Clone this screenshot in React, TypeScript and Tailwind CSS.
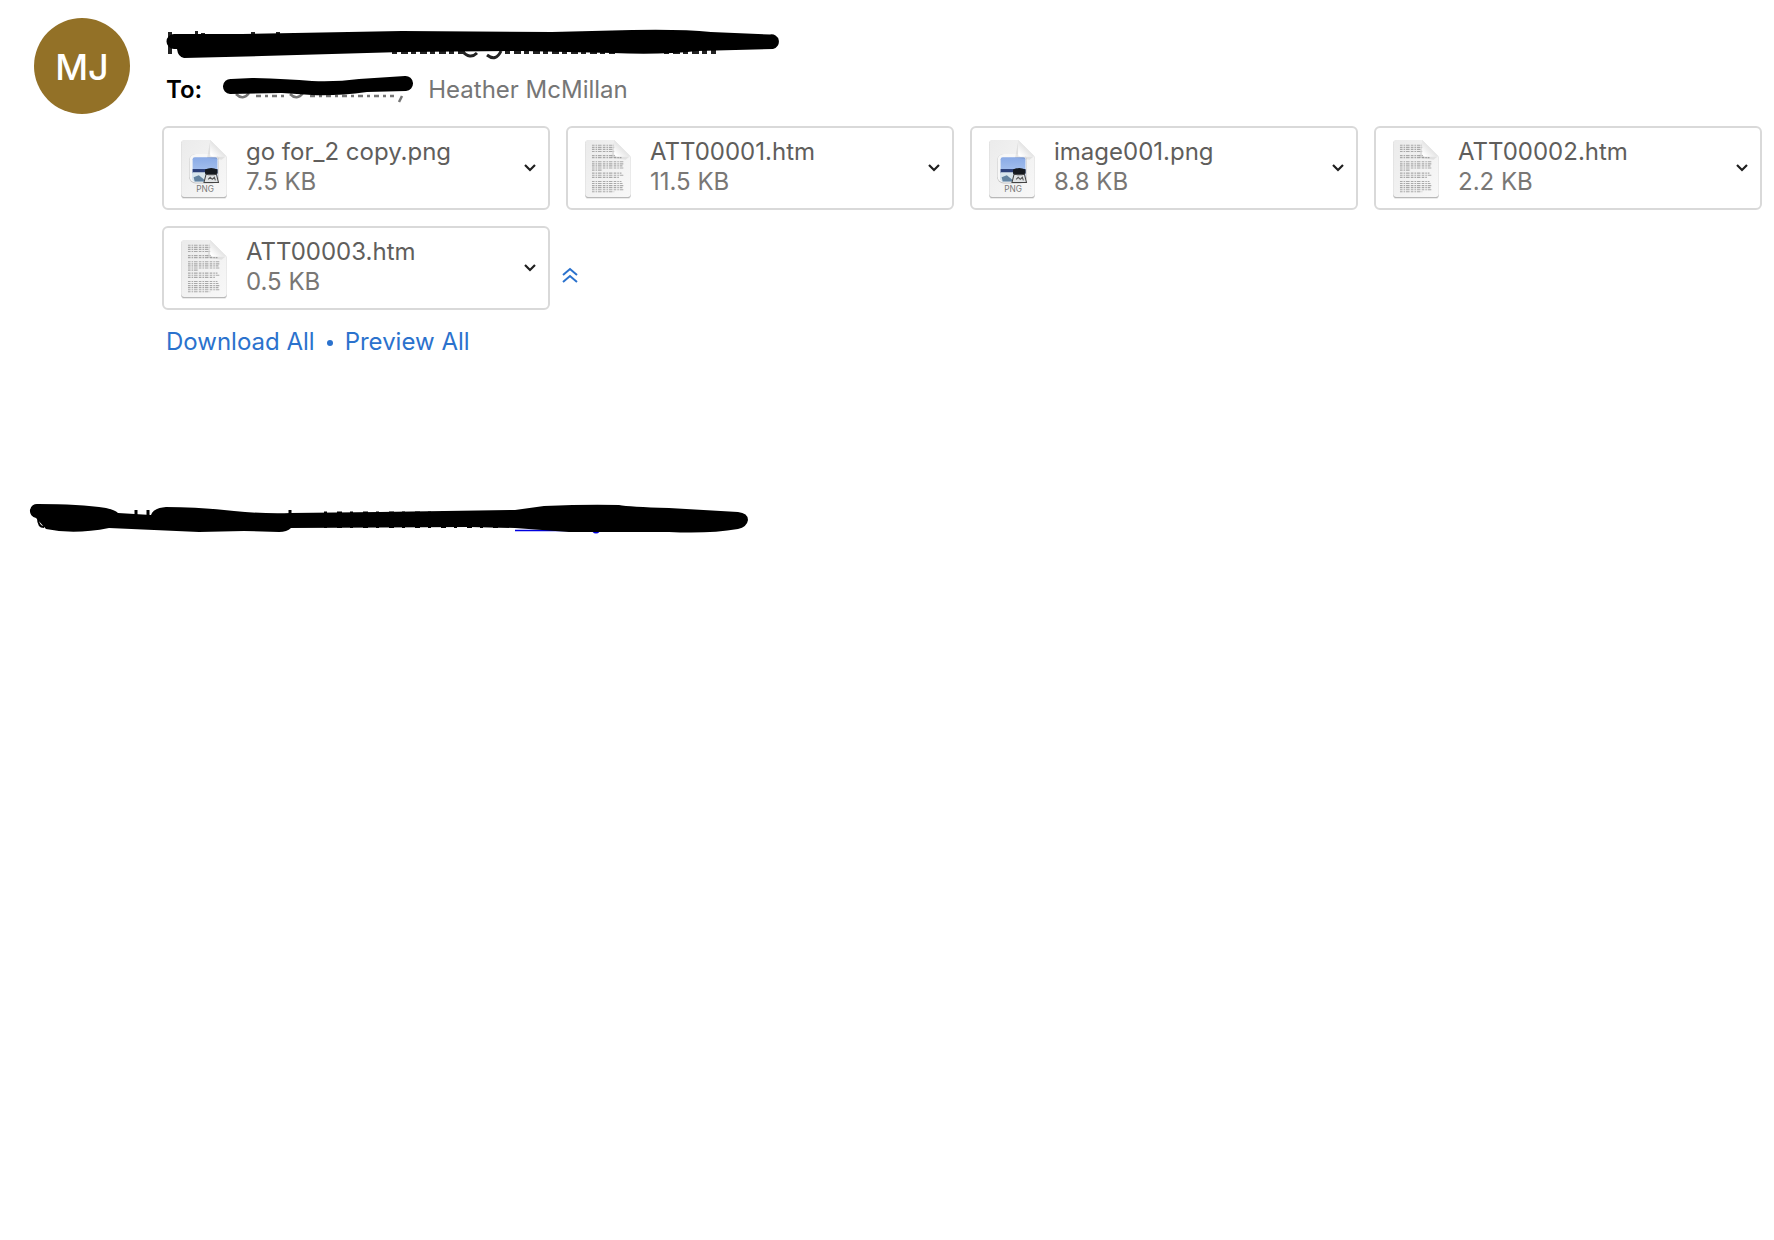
import React from 'react';

type AttachmentKind = 'png' | 'text';

interface Attachment {
  name: string;
  size: string;
  kind: AttachmentKind;
}

const attachments: Attachment[] = [
  { name: 'go for_2 copy.png', size: '7.5 KB', kind: 'png' },
  { name: 'ATT00001.htm', size: '11.5 KB', kind: 'text' },
  { name: 'image001.png', size: '8.8 KB', kind: 'png' },
  { name: 'ATT00002.htm', size: '2.2 KB', kind: 'text' },
  { name: 'ATT00003.htm', size: '0.5 KB', kind: 'text' }
];

// y position and right edge of each line on the text document icon
const docLines = [
  [6, 29], [8, 30], [10, 28], [12, 30],
  [16, 31], [18, 36],
  [22, 38], [24, 39], [26, 37], [28, 38], [30, 18],
  [33, 36], [35, 39], [37, 34],
  [41, 36], [43, 37], [45, 38], [47, 37], [49, 38], [51, 29]
];

function FileIcon({ kind }: { kind: AttachmentKind }) {
  return (
    <svg className="h-[60px] w-12 shrink-0" viewBox="0 -1 46 58" overflow="visible" aria-hidden="true">
      <defs>
        <linearGradient id={`page-${kind}`} x1="0" y1="0" x2="1" y2="1">
          <stop offset="0" stopColor="#ebebeb" />
          <stop offset="1" stopColor="#f8f8f8" />
        </linearGradient>
        <linearGradient id={`fold-${kind}`} x1="0" y1="1" x2="1" y2="0">
          <stop offset="0.1" stopColor="#ffffff" />
          <stop offset="0.5" stopColor="#e4e4e4" />
        </linearGradient>
        <linearGradient id={`sky-${kind}`} x1="0" y1="0" x2="0" y2="1">
          <stop offset="0" stopColor="#8aaae6" />
          <stop offset="1" stopColor="#b7d0f3" />
        </linearGradient>
      </defs>
      <path d="M4 2h25l16 16v37a3 3 0 0 1-3 3H4a3 3 0 0 1-3-3V5a3 3 0 0 1 3-3z" fill="#000" opacity="0.08" />
      <path d="M4 1.500h25l16 16V54a3 3 0 0 1-3 3H4a3 3 0 0 1-3-3V4.500a3 3 0 0 1 3-3z" fill="#b8b8b8" />
      <path d="M4 1h25l16 16v36a3 3 0 0 1-3 3H4a3 3 0 0 1-3-3V4a3 3 0 0 1 3-3z" fill={`url(#page-${kind})`} />
      {kind === 'text' &&
        docLines.map(([y, end]) => (
          <path key={y} d={`M7.500 ${y}H${end}`} stroke="#a9a9a9" strokeWidth="1.100" strokeDasharray="2.500 1 1.500 0.800 3.500 1.200" />
        ))}
      {kind === 'png' && (
        <>
          <rect x="8.500" y="14.500" width="29" height="28.500" rx="6.500" fill="#c4c4c4" />
          <rect x="9" y="14.500" width="28" height="27.500" rx="6" fill="#f7f7f7" />
          <rect x="12" y="17.500" width="24" height="23.500" rx="2" fill={`url(#sky-${kind})`} />
          <path d="M12 29h24v4H12z" fill="#2b3f78" />
          <path d="M12 32h12l3 9H14a2 2 0 0 1-2-2z" fill="#d8e5ec" />
          <path d="M13 37l5-2 5 4v2h-9z" fill="#6383a0" />
          <path d="M24 29.500q6-3 12 0v4q-6 2-12 0z" fill="#15191f" />
          <path d="M25 34q5 1 10 0l2 8H23z" fill="#dfe2e4" stroke="#444" strokeWidth="1" />
          <path d="M27 39l2-2 2 2 2-2 1 3" stroke="#555" strokeWidth="1" fill="none" />
          <text x="24" y="51" textAnchor="middle" fontFamily="Inter, sans-serif" fontSize="8" fill="#777">PNG</text>
        </>
      )}
      <path d="M29 2v15h15l-4 3-14-2z" fill="#000" opacity="0.07" />
      <path d="M29 1l16 16H32a3 3 0 0 1-3-3z" fill={`url(#fold-${kind})`} />
    </svg>
  );
}

function AttachmentCard({ name, size, kind }: Attachment) {
  return (
    <li className="flex h-[84px] items-center rounded-md border-2 border-[#d9d9d9] pl-4 pr-1.5">
      <FileIcon kind={kind} />
      <div className="ml-[18px] min-w-0 flex-1 pb-0.5 leading-[30px]">
        <p className="truncate text-[#605e5c]">{name}</p>
        <p className="text-[#797775]">{size}</p>
      </div>
      <button type="button" aria-label={`Options for ${name}`} className="flex h-8 w-6 items-center justify-center text-[#1f1f1f]">
        <svg width="14" height="10" viewBox="0 0 14 10" fill="none" stroke="currentColor" strokeWidth="2.200">
          <path d="M2 2l5 5 5-5" />
        </svg>
      </button>
    </li>
  );
}

export default function App() {
  return (
    <main className="min-h-screen bg-white pt-[18px] font-['Inter',sans-serif] text-2xl leading-[30px]">
      <header className="flex pl-[34px] pr-3">
        <div className="flex size-24 shrink-0 items-center justify-center rounded-full bg-[#937127] pt-0.5 text-4xl font-medium text-white">
          MJ
        </div>
        <div className="ml-8 min-w-0 flex-1">
          {/* Sender, marked out */}
          <svg className="h-12 w-[620px]" viewBox="0 0 620 48" role="img" aria-label="Sender hidden">
            <path d="M8 14v22M33 15h3M41 15v4M91 14v5M116 14v5" stroke="#222" strokeWidth="4" />
            <path d="M230 34h76M343 34h110M502 34h52" stroke="#222" strokeWidth="4" strokeDasharray="5 4 7 3" />
            <path d="M300 33q8 9 15 2M325 37q9 7 14-4" stroke="#222" strokeWidth="3" fill="none" />
            <path d="M12 16L80 16 240 13 390 14 470 12Q520 11 549 14L608 16.500A7 7 0 0 1 611 31L535 33Q500 37 450 35L360 33 240 34 100 38 22 40Q16 39 15 31L12 31A7.500 7.500 0 0 1 12 16z" />
          </svg>
          <div className="mt-[9px] flex items-center pl-1">
            <span className="font-semibold text-black">To:</span>
            <svg className="ml-5 h-[30px] w-[194px]" viewBox="0 0 194 30" role="img" aria-label="Recipient hidden">
              <path d="M14 19q7 7 13-1M68 19q7 7 13-1" stroke="#767676" strokeWidth="2.500" fill="none" />
              <path d="M34 21h32M88 21h84" stroke="#767676" strokeWidth="2.500" strokeDasharray="5 4 3 4" />
              <path d="M180 21l-3 6" stroke="#767676" strokeWidth="2.500" />
              <path d="M9 4L30 3Q65 4 90 6Q115 7 137 4L183 1A7.500 7.500 0 0 1 184 16L145 17Q115 21 90 20L60 18 8 19A7.500 7.500 0 0 1 9 4z" />
            </svg>
            <span className="ml-3 text-[#767676]">Heather McMillan</span>
          </div>
          <ul className="mt-[21px] grid grid-cols-4 gap-4">
            {attachments.map((file) => (
              <AttachmentCard key={file.name} {...file} />
            ))}
            <li className="-ml-1 flex items-center pt-3.5">
              <button type="button" aria-label="Collapse attachments" className="text-[#2b72cd]">
                <svg width="16" height="16" viewBox="0 0 16 16" fill="none" stroke="currentColor" strokeWidth="2">
                  <path d="M1 8l7-6 7 6M1 15l7-6 7 6" />
                </svg>
              </button>
            </li>
          </ul>
          <nav className="mt-[17px] flex items-center pl-1 text-[#2b72cd]">
            <a href="#download">Download All</a>
            <span className="mx-3 mt-0.5 size-[6px] rounded-full bg-[#2b72cd]" />
            <a href="#preview">Preview All</a>
          </nav>
        </div>
      </header>

      {/* Signature line, marked out */}
      <section className="mt-[143px] pl-[29px]">
        <svg className="h-10 w-[724px]" viewBox="0 0 724 40" role="img" aria-label="Signature hidden">
          <path d="M9 18q0 9 6 9" stroke="#000" strokeWidth="2" fill="none" />
          <path d="M107 10v8M119 10v8M261 10v5" stroke="#000" strokeWidth="3" />
          <path d="M295 12.500h180M295 27h180" stroke="#000" strokeWidth="2" strokeDasharray="3 10 5 8" />
          <path d="M486 30.500h180" stroke="#0000e0" strokeWidth="1.500" />
          <path d="M564 31q3 3 6 0" stroke="#0000e0" strokeWidth="2" fill="none" />
          <path d="M9 4Q50 4 77 8Q86 10 89 13L122 15Q124 8 137 7Q170 7 205 11Q235 14 262 13L350 12 486 10 515 6Q560 4 590 5Q600 7 640 8L709 12Q719 13 719 20Q718 27 709 29Q680 34 640 32L540 32 486 28 440 27 262 28Q258 32 250 32L215 31 170 32 80 28Q45 35 17 29L7 18A7 7 0 0 1 9 4z" />
        </svg>
      </section>
    </main>
  );
}
